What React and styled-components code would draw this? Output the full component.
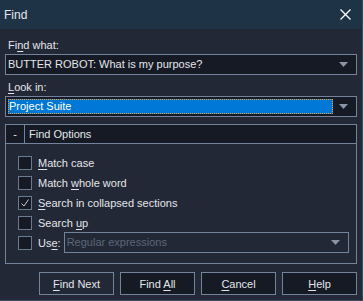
import React from "react";
import styled, { createGlobalStyle } from "styled-components";

const Global = createGlobalStyle`
  html, body {
    margin: 0;
    padding: 0;
    background: #222836;
  }
  * { box-sizing: border-box; }
`;

const Window = styled.div`
  width: 363px;
  height: 301px;
  background: #222836;
  border-right: 1px solid #3d4a5c;
  border-bottom: 1px solid #3d4a5c;
  font-family: "Liberation Sans", Arial, sans-serif;
  font-size: 11px;
  color: #e4e6ea;
  display: flex;
  flex-direction: column;
`;

const TitleBar = styled.div`
  height: 29px;
  background: #1e3346;
  display: flex;
  align-items: center;
  justify-content: space-between;
  padding: 0 11px 0 4px;
  font-size: 12px;
`;

const Body = styled.div`
  display: flex;
  flex-direction: column;
  padding: 0 5px;
`;

const Label = styled.div`
  line-height: 15px;
  padding-left: 3px;
  margin-top: ${(p) => p.$top}px;
  margin-bottom: 1px;
`;

const Combo = styled.div`
  height: 21px;
  border: 1px solid #72839b;
  background: ${(p) => (p.$disabled ? "#222836" : "#151a24")};
  display: flex;
  align-items: center;
  padding: 0 8px 0 2px;
  gap: 4px;
  color: ${(p) => (p.$disabled ? "#5d6778" : "inherit")};
  flex: ${(p) => (p.$grow ? 1 : "none")};
  margin-left: ${(p) => (p.$grow ? -3 : 0)}px;
`;

const ComboText = styled.div`
  flex: 1;
  line-height: 15px;
  padding-left: ${(p) => (p.$selected ? 1 : 0)}px;
  background: ${(p) => (p.$selected ? "#0078d7" : "transparent")};
  outline: ${(p) => (p.$selected ? "1px dotted #f0a030" : "none")};
  outline-offset: -1px;
  color: ${(p) => (p.$selected ? "#ffffff" : "inherit")};
  margin-right: ${(p) => (p.$selected ? 2 : 0)}px;
`;

const Arrow = () => (
  <svg width="9" height="5" viewBox="0 0 9 5">
    <path d="M0 0 L9 0 L4.5 5 Z" fill="#8a94a4" />
  </svg>
);

const Group = styled.div`
  margin-top: 7px;
  height: 140px;
  border: 1px solid #72839b;
  display: flex;
  flex-direction: column;
`;

const GroupHeader = styled.div`
  height: 19px;
  display: flex;
  background: #151a24;
  border-bottom: 1px solid #72839b;
`;

const Toggle = styled.div`
  width: 19px;
  border-right: 1px solid #72839b;
  display: flex;
  align-items: center;
  justify-content: center;
`;

const HeaderTitle = styled.div`
  padding-left: 4px;
  display: flex;
  align-items: center;
`;

const Options = styled.div`
  display: flex;
  flex-direction: column;
  padding: 12px 0 0 12px;
  gap: 7px;
`;

const Row = styled.div`
  display: flex;
  align-items: center;
  gap: 6px;
  height: 13px;
  padding-right: 7px;
`;

const Box = styled.div`
  width: 14px;
  height: 14px;
  border: 1px solid #6c7a8e;
  background: #151a24;
  display: flex;
  align-items: center;
  justify-content: center;
  flex: none;
`;

const U = styled.span`
  text-decoration: underline;
  text-underline-offset: 2px;
`;

const Buttons = styled.div`
  display: flex;
  justify-content: flex-end;
  gap: 6px;
  margin-top: 8px;
`;

const Button = styled.div`
  width: 75px;
  height: 23px;
  border: 1px solid #72839b;
  background: ${(p) => (p.$default ? "#222836" : "#151a24")};
  display: flex;
  align-items: center;
  justify-content: center;
`;

function Check({ checked }) {
  return (
    <Box>
      {checked && (
        <svg width="10" height="10" viewBox="0 0 10 10">
          <path d="M1.5 5.5 L4 8 L8.5 1.5" fill="none" stroke="#c8ccd4" strokeWidth="1" />
        </svg>
      )}
    </Box>
  );
}

export default function App() {
  return (
    <Window>
      <Global />
      <TitleBar>
        <span>Find</span>
        <svg width="11" height="11" viewBox="0 0 11 11">
          <path d="M0.5 0.5 L10.5 10.5 M10.5 0.5 L0.5 10.5" stroke="#ffffff" strokeWidth="1.3" />
        </svg>
      </TitleBar>
      <Body>
        <Label $top={9}>
          Fi<U>n</U>d what:
        </Label>
        <Combo>
          <ComboText>BUTTER ROBOT: What is my purpose?</ComboText>
          <Arrow />
        </Combo>
        <Label $top={5}>
          <U>L</U>ook in:
        </Label>
        <Combo>
          <ComboText $selected>Project Suite</ComboText>
          <Arrow />
        </Combo>
        <Group>
          <GroupHeader>
            <Toggle>-</Toggle>
            <HeaderTitle>Find Options</HeaderTitle>
          </GroupHeader>
          <Options>
            <Row>
              <Check />
              <span>
                <U>M</U>atch case
              </span>
            </Row>
            <Row>
              <Check />
              <span>
                Match <U>w</U>hole word
              </span>
            </Row>
            <Row>
              <Check checked />
              <span>
                <U>S</U>earch in collapsed sections
              </span>
            </Row>
            <Row>
              <Check />
              <span>
                Search <U>u</U>p
              </span>
            </Row>
            <Row>
              <Check />
              <span>
                Us<U>e</U>:
              </span>
              <Combo $disabled $grow>
                <ComboText>Regular expressions</ComboText>
                <Arrow />
              </Combo>
            </Row>
          </Options>
        </Group>
        <Buttons>
          <Button $default>
            <span>
              <U>F</U>ind Next
            </span>
          </Button>
          <Button>
            <span>
              Find <U>A</U>ll
            </span>
          </Button>
          <Button>
            <span>
              <U>C</U>ancel
            </span>
          </Button>
          <Button>
            <span>
              <U>H</U>elp
            </span>
          </Button>
        </Buttons>
      </Body>
    </Window>
  );
}
